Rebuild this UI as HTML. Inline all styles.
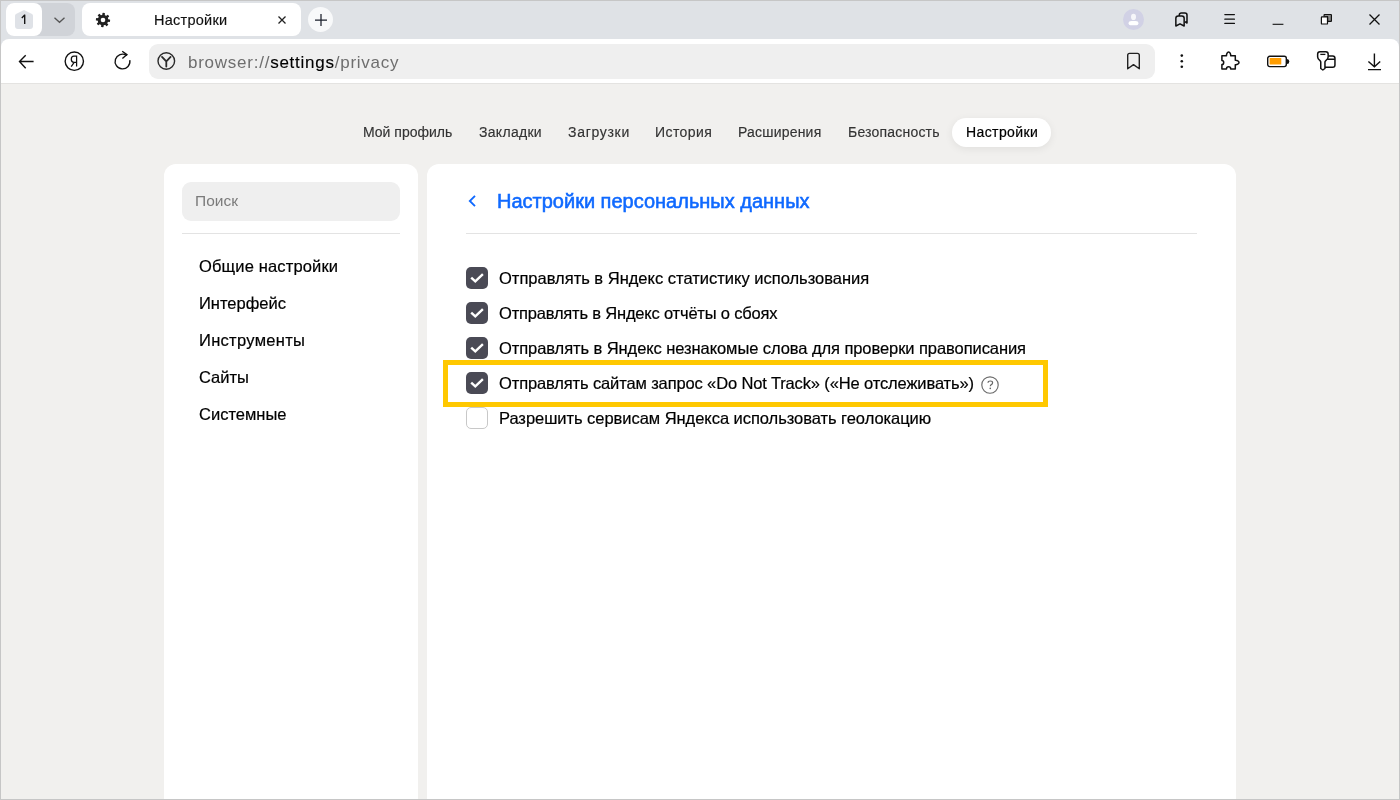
<!DOCTYPE html>
<html><head><meta charset="utf-8">
<style>
*{box-sizing:border-box;margin:0;padding:0}
html,body{width:1400px;height:800px;overflow:hidden}
body{position:relative;background:#f1f0ee;font-family:"Liberation Sans",sans-serif;color:#000}
.abs{position:absolute}
#frame{position:absolute;left:0;top:0;width:1400px;height:800px;border:1px solid #c6c6c6;pointer-events:none;z-index:50}
#tabstrip{position:absolute;left:0;top:0;width:1400px;height:50px;background:#dfe2e6}
#toolbar{position:absolute;left:1px;top:39px;width:1398px;height:45px;background:#fff;border-radius:8px 8px 0 0;border-bottom:1px solid #e4e3e1}
.txt{position:absolute;white-space:nowrap;line-height:1}
svg{position:absolute;overflow:visible}
.card{position:absolute;background:#fff;border-radius:12px}
.cb{position:absolute;left:466px;width:22px;height:22px;border-radius:5px;background:#4a4a55}
.cb svg{left:0;top:0}
.row{position:absolute;left:499px;font-size:16.5px;color:#000;white-space:nowrap;line-height:20px;-webkit-text-stroke:0.2px #000;margin-top:0.5px}
.menu{position:absolute;left:199px;font-size:16.5px;color:#000;white-space:nowrap;line-height:20px;-webkit-text-stroke:0.2px #000}
.nav{position:absolute;top:124px;font-size:14px;color:#333;white-space:nowrap;line-height:16px;-webkit-text-stroke:0.15px #333}
</style></head><body>
<div id="wrap" style="position:absolute;left:0;top:0;width:1400px;height:800px;will-change:transform;background:#f1f0ee">
<div id="tabstrip"></div>
<!-- tab group -->
<div class="abs" style="left:6px;top:3px;width:69px;height:33px;background:#d0d3d8;border-radius:8px"></div>
<div class="abs" style="left:6px;top:3px;width:36px;height:33px;background:#fff;border-radius:8px"></div>
<svg style="left:15px;top:10px" width="18" height="19" viewBox="0 0 18 19"><path d="M9 0 L17 4 Q18 4.5 18 6 L18 16 Q18 19 15 19 L3 19 Q0 19 0 16 L0 6 Q0 4.5 1 4 Z" fill="#dfe2e7"/></svg>
<svg style="left:0;top:0" width="40" height="40" viewBox="0 0 40 40"><path d="M21.8 18 L24.7 15.1 V24" fill="none" stroke="#111" stroke-width="1.35" stroke-linejoin="round"/></svg>
<svg style="left:53px;top:16px" width="13" height="8" viewBox="0 0 13 8"><path d="M1.5 1.7 L6.5 6.3 L11.5 1.7" fill="none" stroke="#555" stroke-width="1.3"/></svg>
<!-- active tab -->
<div class="abs" style="left:82px;top:3px;width:219px;height:33px;background:#fff;border-radius:8px"></div>
<svg style="left:95px;top:11.6px" width="16" height="16" viewBox="0 0 16 16"><g fill="#222"><circle cx="8" cy="8" r="5.3"/><rect x="6.75" y="0.9" width="2.5" height="3.2" rx="0.5" transform="rotate(6 8 8)"/><rect x="6.75" y="0.9" width="2.5" height="3.2" rx="0.5" transform="rotate(51 8 8)"/><rect x="6.75" y="0.9" width="2.5" height="3.2" rx="0.5" transform="rotate(96 8 8)"/><rect x="6.75" y="0.9" width="2.5" height="3.2" rx="0.5" transform="rotate(141 8 8)"/><rect x="6.75" y="0.9" width="2.5" height="3.2" rx="0.5" transform="rotate(186 8 8)"/><rect x="6.75" y="0.9" width="2.5" height="3.2" rx="0.5" transform="rotate(231 8 8)"/><rect x="6.75" y="0.9" width="2.5" height="3.2" rx="0.5" transform="rotate(276 8 8)"/><rect x="6.75" y="0.9" width="2.5" height="3.2" rx="0.5" transform="rotate(321 8 8)"/></g><circle cx="8" cy="8" r="2.3" fill="#fff"/></svg>
<div class="txt" style="left:154px;top:13px;font-size:14.5px;color:#111;letter-spacing:0.25px;-webkit-text-stroke:0.15px #111">Настройки</div>
<svg style="left:278px;top:15.5px" width="8" height="8" viewBox="0 0 8 8"><path d="M0.5 0.5 L7.5 7.5 M7.5 0.5 L0.5 7.5" stroke="#222" stroke-width="1.3"/></svg>
<div class="abs" style="left:308px;top:7px;width:25px;height:25px;border-radius:50%;background:#f8f9fa"></div>
<svg style="left:314.5px;top:13.5px" width="12" height="12" viewBox="0 0 12 12"><path d="M6 0 V12 M0 6 H12" stroke="#1a1f2b" stroke-width="1.25"/></svg>
<!-- right tabstrip icons -->
<div class="abs" style="left:1123px;top:9.2px;width:21.2px;height:21.2px;border-radius:50%;background:#d1d1e5"></div>
<svg style="left:1123px;top:9px" width="21" height="21" viewBox="0 0 21 21"><ellipse cx="10.5" cy="7.9" rx="2.5" ry="3.1" fill="#f6f6fa"/><path d="M5.6 14.3 Q5.6 12 8.5 12 H12.5 Q15.4 12 15.4 14.3 Q15.4 16.2 13.6 16.2 H7.4 Q5.6 16.2 5.6 14.3 Z" fill="#fff"/></svg>
<svg style="left:1174px;top:11px" width="16" height="17" viewBox="0 0 16 17"><path d="M5.3 4.9 V4 Q5.3 1.9 7.4 1.9 H10.9 Q13 1.9 13 4 V12 L10.8 10.7" fill="none" stroke="#111" stroke-width="1.5" stroke-linejoin="round"/><path d="M1.85 15 V7.3 Q1.85 5 4.1 5 H7.9 Q10.15 5 10.15 7.3 V15 L6 12.8 Z" fill="none" stroke="#111" stroke-width="1.5" stroke-linejoin="round"/></svg>
<svg style="left:1224px;top:13px" width="12" height="12" viewBox="0 0 12 12"><path d="M0.85 1.56 H10.4 M0.85 6.17 H10.4 M0.85 10.45 H10.4" stroke="#111" stroke-width="1.3" stroke-linecap="round"/></svg>
<svg style="left:1272px;top:23px" width="12" height="3" viewBox="0 0 12 3"><path d="M0.6 1.3 H11.4" stroke="#111" stroke-width="1.1"/></svg>
<svg style="left:1320px;top:13px" width="13" height="13" viewBox="0 0 13 13"><path d="M4.1 3.6 V2 Q4.1 1.5 4.6 1.5 H10.9 Q11.4 1.5 11.4 2 V7.9 Q11.4 8.4 10.9 8.4 H7.6 V3.6 Z" fill="#8c8c8c" stroke="#111" stroke-width="1.2" stroke-linejoin="round"/><rect x="1.4" y="3.8" width="6.1" height="7.2" rx="0.6" fill="#fff" stroke="#111" stroke-width="1.2"/></svg>
<svg style="left:1369px;top:14px" width="11" height="11" viewBox="0 0 11 11"><path d="M0.5 0.5 L10.5 10.5 M10.5 0.5 L0.5 10.5" stroke="#111" stroke-width="1.3"/></svg>

<div id="toolbar"></div>
<!-- toolbar icons -->
<svg style="left:18px;top:54px" width="17" height="16" viewBox="0 0 17 16"><path d="M15.6 7.5 H1.6 M7.7 1.2 L1.5 7.5 L7.7 14.2" fill="none" stroke="#111" stroke-width="1.4"/></svg>
<svg style="left:64px;top:51px" width="21" height="21" viewBox="0 0 21 21"><circle cx="10.3" cy="10.2" r="9.15" fill="none" stroke="#111" stroke-width="1.4"/><path d="M12.6 15.6 V5.2 H9.9 Q7.3 5.2 7.3 8.3 Q7.3 11.4 10 11.4 H12.6 M10.2 11.4 L7.2 15.6" fill="none" stroke="#111" stroke-width="1.25"/></svg>
<svg style="left:114px;top:50px" width="18" height="20" viewBox="0 0 18 20"><path d="M15.8 10.2 A7.4 7.4 0 1 1 12.4 5.2 L13 4.6" fill="none" stroke="#111" stroke-width="1.35"/><path d="M8.2 1.2 L12.9 4.6 L8.4 8.6" fill="none" stroke="#111" stroke-width="1.35"/></svg>
<div class="abs" style="left:149px;top:44px;width:1006px;height:35px;background:#efefef;border-radius:9px"></div>
<svg style="left:157px;top:52px" width="19" height="19" viewBox="0 0 19 19"><circle cx="9.3" cy="9" r="8.3" fill="none" stroke="#2a2a2a" stroke-width="1.4"/><path d="M5 4.9 L9.3 9.4 L13.6 4.9 M9.3 9.4 V14.6" fill="none" stroke="#2a2a2a" stroke-width="1.8" stroke-linecap="round"/></svg>
<div class="txt" style="left:188px;top:54px;font-size:17px;color:#6e6e6e;letter-spacing:0.75px">browser://<span style="color:#000;-webkit-text-stroke:0.12px #000">settings</span>/privacy</div>
<svg style="left:1126px;top:52px" width="15" height="18" viewBox="0 0 15 18"><path d="M1.7 16.8 V3.3 Q1.7 1.4 3.6 1.4 H11.4 Q13.3 1.4 13.3 3.3 V16.8 L7.5 12.6 Z" fill="none" stroke="#222" stroke-width="1.4" stroke-linejoin="round"/></svg>
<svg style="left:1179px;top:53px" width="6" height="16" viewBox="0 0 6 16"><circle cx="2.8" cy="2.6" r="1.3" fill="#111"/><circle cx="2.8" cy="8.3" r="1.3" fill="#111"/><circle cx="2.8" cy="13.8" r="1.3" fill="#111"/></svg>
<svg style="left:1215px;top:47px" width="30" height="27" viewBox="0 0 30 27"><path d="M6.9 8.8 H11.5 C11.3 7.1 12.2 5.1 13.6 5.1 C15 5.1 15.9 7.1 15.7 8.8 H20.3 V13.3 C22.1 13.1 24 14.1 24 15.5 C24 16.9 22.1 17.9 20.3 17.7 V21.9 H15.7 C15.7 20.7 14.9 19.8 13.6 19.8 C12.3 19.8 11.5 20.7 11.5 21.9 H6.9 V17.6 C8 17.6 8.7 16.6 8.7 15.5 C8.7 14.4 8 13.4 6.9 13.4 Z" fill="none" stroke="#111" stroke-width="1.5" stroke-linejoin="round"/></svg>
<svg style="left:1266px;top:55px" width="24" height="13" viewBox="0 0 24 13"><rect x="1.7" y="1.3" width="18.6" height="10.3" rx="2" fill="#fff" stroke="#111" stroke-width="1.4"/><rect x="3.6" y="3" width="11.7" height="6.6" rx="0.6" fill="#ff9d00"/><path d="M21 4 Q23.3 4 23.3 6.5 Q23.3 9 21 9 Z" fill="#111"/></svg>
<svg style="left:1316px;top:50px" width="21" height="22" viewBox="0 0 21 22"><path d="M12.15 6.05 H16.7 Q18.95 6.05 18.95 8.3 V14.9 Q18.95 17.15 16.7 17.15 H8.95 M9.6 9.3 H18.95" fill="none" stroke="#111" stroke-width="1.5"/><path d="M4.75 12 Q4.75 11.2 4 10.6 Q1.65 9 1.65 7 V4 Q1.65 1.75 4 1.75 H9.8 Q12.15 1.75 12.15 4 V7 Q12.15 9 9.8 10.6 Q8.95 11.2 8.95 12 V18.5 L6.85 20 L4.75 18.5 Z" fill="#fff" stroke="#111" stroke-width="1.5" stroke-linejoin="round"/><path d="M4.3 4.4 H9.4" stroke="#111" stroke-width="1.3"/></svg>
<svg style="left:1367px;top:53px" width="15" height="18" viewBox="0 0 15 18"><path d="M7.4 0.6 V13.5 M1.4 8.5 L7.4 13.8 L13.2 8.5 M1 16.6 H14" fill="none" stroke="#111" stroke-width="1.4"/></svg>

<!-- page nav -->
<div class="nav" style="left:363px">Мой профиль</div>
<div class="nav" style="left:479px;letter-spacing:0.3px">Закладки</div>
<div class="nav" style="left:568px;letter-spacing:0.7px">Загрузки</div>
<div class="nav" style="left:655px;letter-spacing:0.43px">История</div>
<div class="nav" style="left:738px;letter-spacing:0.2px">Расширения</div>
<div class="nav" style="left:848px;letter-spacing:0.2px">Безопасность</div>
<div class="abs" style="left:952px;top:118px;width:99px;height:28.5px;border-radius:14.25px;background:#fff;box-shadow:0 2px 8px rgba(0,0,0,0.07)"></div>
<div class="nav" style="left:966px;color:#000;letter-spacing:0.4px;-webkit-text-stroke:0.2px #000">Настройки</div>

<!-- sidebar -->
<div class="card" style="left:164px;top:164px;width:254px;height:700px"></div>
<div class="abs" style="left:182px;top:182px;width:218px;height:39px;border-radius:9px;background:#efefef"></div>
<div class="txt" style="left:195px;top:192.5px;font-size:15.5px;color:#7b7b7b">Поиск</div>
<div class="abs" style="left:182px;top:233px;width:218px;height:1px;background:#e3e3e3"></div>
<div class="menu" style="top:256px;letter-spacing:0.15px">Общие настройки</div>
<div class="menu" style="top:293px">Интерфейс</div>
<div class="menu" style="top:330px;letter-spacing:0.3px">Инструменты</div>
<div class="menu" style="top:367px">Сайты</div>
<div class="menu" style="top:404px">Системные</div>

<!-- main card -->
<div class="card" style="left:427px;top:164px;width:809px;height:700px"></div>
<svg style="left:467px;top:194px" width="10" height="14" viewBox="0 0 10 14"><path d="M8 1.8 L2.8 7 L8 12.2" fill="none" stroke="#0f69ff" stroke-width="1.85"/></svg>
<div class="txt" style="left:497px;top:191px;font-size:20px;font-weight:400;color:#0f69ff;-webkit-text-stroke:0.55px #0f69ff">Настройки персональных данных</div>
<div class="abs" style="left:466px;top:233px;width:731px;height:1px;background:#e3e3e3"></div>

<div class="cb" style="top:267px"><svg width="22" height="22" viewBox="0 0 22 22"><path d="M5.2 10.6 L9.3 14.4 L16.9 7.2" fill="none" stroke="#fff" stroke-width="2.4"/></svg></div>
<div class="row" style="top:267px;letter-spacing:0px">Отправлять в Яндекс статистику использования</div>
<div class="cb" style="top:302px"><svg width="22" height="22" viewBox="0 0 22 22"><path d="M5.2 10.6 L9.3 14.4 L16.9 7.2" fill="none" stroke="#fff" stroke-width="2.4"/></svg></div>
<div class="row" style="top:302px;letter-spacing:-0.19px">Отправлять в Яндекс отчёты о сбоях</div>
<div class="cb" style="top:337px"><svg width="22" height="22" viewBox="0 0 22 22"><path d="M5.2 10.6 L9.3 14.4 L16.9 7.2" fill="none" stroke="#fff" stroke-width="2.4"/></svg></div>
<div class="row" style="top:337px;letter-spacing:-0.075px">Отправлять в Яндекс незнакомые слова для проверки правописания</div>
<div class="cb" style="top:372px"><svg width="22" height="22" viewBox="0 0 22 22"><path d="M5.2 10.6 L9.3 14.4 L16.9 7.2" fill="none" stroke="#fff" stroke-width="2.4"/></svg></div>
<div class="row" style="top:372px;letter-spacing:-0.13px">Отправлять сайтам запрос «Do Not Track» («Не отслеживать»)</div>
<svg style="left:981px;top:376px" width="18" height="18" viewBox="0 0 18 18"><circle cx="9" cy="9" r="8.2" fill="none" stroke="#6a6a6a" stroke-width="1.15"/><path d="M7 6.7 Q7.1 5 9.3 5 Q11.6 5 11.6 6.8 Q11.6 8 10.3 8.6 Q9.3 9.1 9.3 10.3" fill="none" stroke="#666" stroke-width="1.2"/><circle cx="9.25" cy="12.4" r="0.8" fill="#666"/></svg>
<div class="cb" style="top:407px;background:#fff;border:1px solid #c8c8c8"></div>
<div class="row" style="top:407px;letter-spacing:-0.044px">Разрешить сервисам Яндекса использовать геолокацию</div>

<div class="abs" style="left:443px;top:360px;width:605px;height:47px;border:5px solid #ffc800"></div>

<div id="frame"></div>
</div>
</body></html>
